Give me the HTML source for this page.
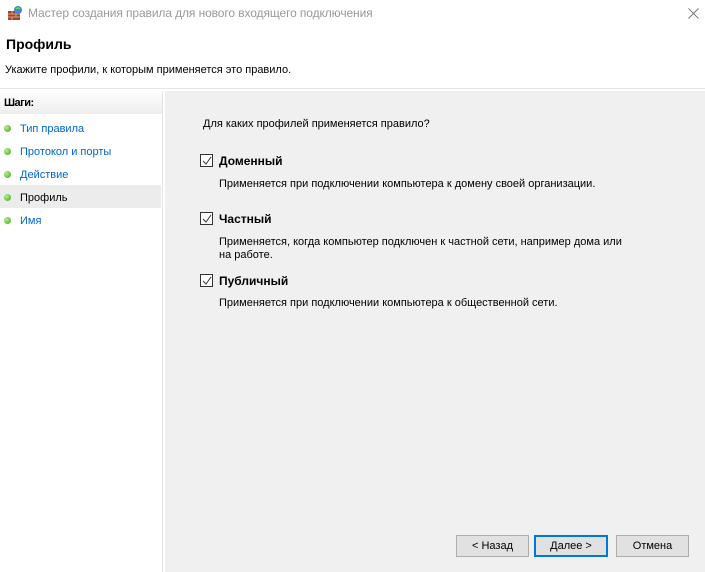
<!DOCTYPE html>
<html><head><meta charset="utf-8"><style>
*{margin:0;padding:0;box-sizing:border-box}
body{width:705px;height:572px;background:#fff;font-family:"Liberation Sans",sans-serif;font-size:11px;color:#000;position:relative;overflow:hidden}
.a{position:absolute;white-space:nowrap}
.t{margin-top:2px}
.link{color:#0066cc}
.dot{position:absolute;left:4px;width:7px;height:7px;border-radius:50%;background:radial-gradient(circle at 35% 35%,#b6ef8a,#3ea21a)}
.cb{position:absolute;left:200px;width:13px;height:13px;border:1px solid #333;background:#fff}
.btn{position:absolute;top:535px;height:22px;border:1px solid #adadad;background:#e1e1e1;text-align:center;line-height:21px;font-size:11px}
.b{font-weight:bold;font-size:12px}
</style></head><body>
<svg class="a" style="left:7px;top:5px" width="16" height="16" viewBox="0 0 16 16"><rect x="1" y="6" width="12" height="9" fill="#a0452a"/><path d="M1 9h12M1 12h12M5 6v3M9 9v3M5 12v3" stroke="#d9a080" stroke-width="1"/><circle cx="11" cy="5" r="4" fill="#3a8ad6"/><path d="M9 4q2-2 4 0" stroke="#7cd050" stroke-width="1.5" fill="none"/></svg>
<div class="a" style="left:28px;top:6px;font-size:12px;letter-spacing:-0.1px;color:#999">Мастер создания правила для нового входящего подключения</div>
<svg class="a" style="left:688px;top:8px" width="11" height="11"><path d="M0.5 0.5L10.5 10.5M10.5 0.5L0.5 10.5" stroke="#777" stroke-width="1"/></svg>
<div class="a" style="left:6px;top:36px;font-size:14px;font-weight:bold">Профиль</div>
<div class="a t" style="left:5px;top:62px">Укажите профили, к которым применяется это правило.</div>
<div class="a" style="left:0;top:88px;width:705px;height:1px;background:#e5e5e5"></div>
<div class="a" style="left:0;top:91px;width:162px;height:23px;background:linear-gradient(#fff,#ededed)"></div>
<div class="a t" style="left:4px;top:95px;font-weight:bold;letter-spacing:-0.5px">Шаги:</div>
<div class="a" style="left:162px;top:91px;width:1px;height:481px;background:#e3e3e3"></div>
<div class="a" style="left:165px;top:91px;width:540px;height:481px;background:#f0f0f0"></div>
<div class="a" style="left:0;top:185px;width:161px;height:23px;background:#ececec"></div>
<div class="dot" style="top:125px"></div><div class="a link t" style="left:20px;top:121px">Тип правила</div>
<div class="dot" style="top:148px"></div><div class="a link t" style="left:20px;top:144px">Протокол и порты</div>
<div class="dot" style="top:171px"></div><div class="a link t" style="left:20px;top:167px">Действие</div>
<div class="dot" style="top:194px"></div><div class="a t" style="left:20px;top:190px">Профиль</div>
<div class="dot" style="top:217px"></div><div class="a link t" style="left:20px;top:213px">Имя</div>
<div class="a t" style="left:203px;top:116px">Для каких профилей применяется правило?</div>
<div class="cb" style="top:154px"></div><svg class="a" style="left:202px;top:156px" width="10" height="10"><path d="M1 5l3 3 5-7" stroke="#333" fill="none"/></svg>
<div class="a b" style="left:219px;top:154px">Доменный</div>
<div class="a t" style="left:219px;top:176px">Применяется при подключении компьютера к домену своей организации.</div>
<div class="cb" style="top:212px"></div><svg class="a" style="left:202px;top:214px" width="10" height="10"><path d="M1 5l3 3 5-7" stroke="#333" fill="none"/></svg>
<div class="a b" style="left:219px;top:212px">Частный</div>
<div class="a t" style="left:219px;top:234px">Применяется, когда компьютер подключен к частной сети, например дома или</div>
<div class="a t" style="left:219px;top:247px">на работе.</div>
<div class="cb" style="top:274px"></div><svg class="a" style="left:202px;top:276px" width="10" height="10"><path d="M1 5l3 3 5-7" stroke="#333" fill="none"/></svg>
<div class="a b" style="left:219px;top:274px">Публичный</div>
<div class="a t" style="left:219px;top:295px">Применяется при подключении компьютера к общественной сети.</div>
<div class="btn" style="left:456px;width:73px">&lt; Назад</div>
<div class="btn" style="left:534px;width:74px;border:2px solid #0078d7;line-height:19px">Далее &gt;</div>
<div class="btn" style="left:616px;width:73px">Отмена</div>
</body></html>
